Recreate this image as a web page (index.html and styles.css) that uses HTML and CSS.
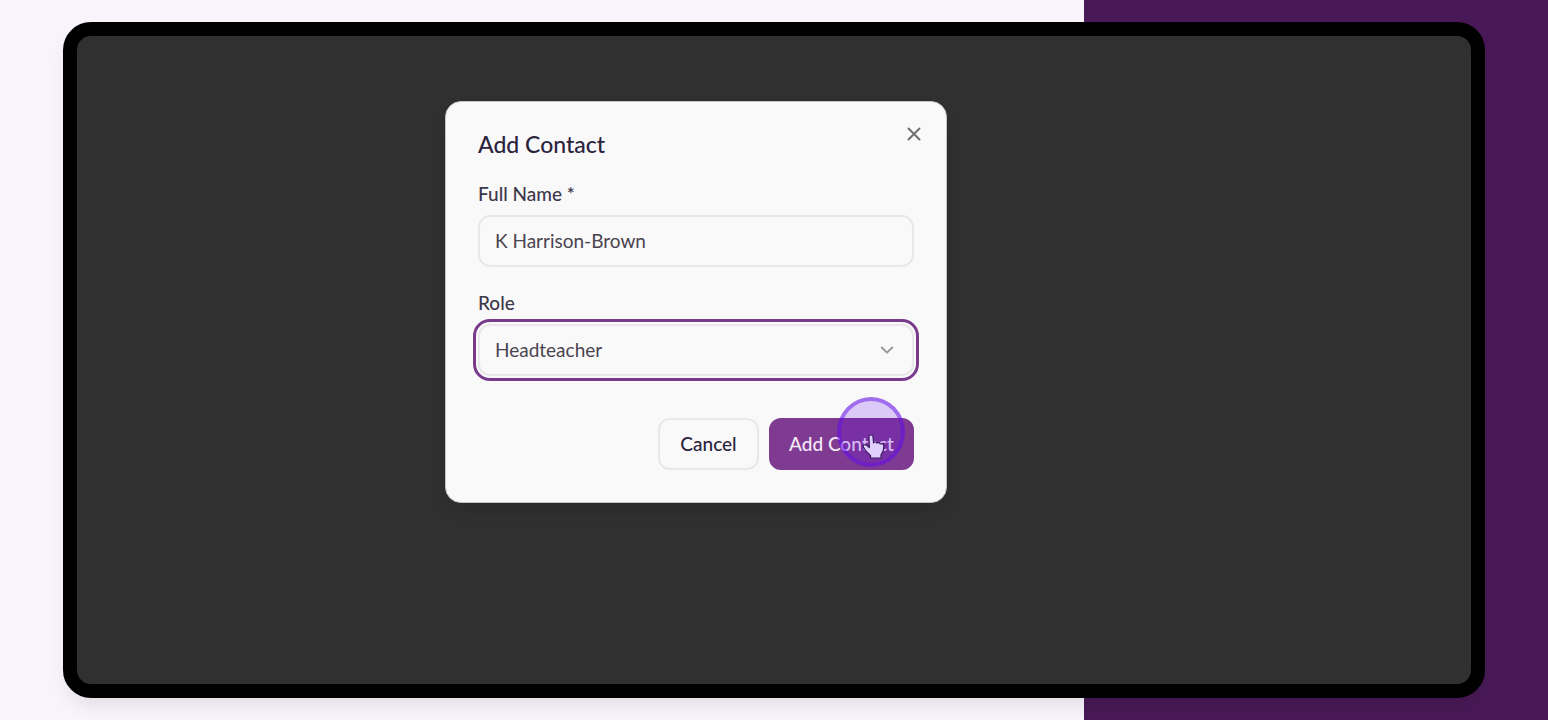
FILE: index.html
```html
<!DOCTYPE html>
<html lang="en">
<head>
    <meta charset="UTF-8">
    <meta name="viewport" content="width=device-width, initial-scale=1.0">
    <title>Add Contact</title>
    <link rel="stylesheet" href="styles.css">
</head>
<body>
    <main class="device">
        <form class="modal" role="dialog" aria-labelledby="modal-title">
            <button type="button" class="close-btn" aria-label="Close">
                <svg width="14" height="14" viewBox="0 0 14 14" fill="none" stroke="currentColor" stroke-width="2" stroke-linecap="round">
                    <path d="M1.500 1.500l11 11M12.500 1.500l-11 11"/>
                </svg>
            </button>

            <h1 id="modal-title">Add Contact</h1>

            <div class="field">
                <label for="full-name">Full Name *</label>
                <input type="text" id="full-name" value="K Harrison-Brown">
            </div>

            <div class="field">
                <label for="role">Role</label>
                <div class="select-wrap">
                    <select id="role">
                        <option selected>Headteacher</option>
                    </select>
                    <svg class="chevron" width="14" height="8" viewBox="0 0 14 8" fill="none" stroke="currentColor" stroke-width="2" stroke-linecap="round" stroke-linejoin="round">
                        <path d="M1.800 1.500L7 6.600l5.200-5.100"/>
                    </svg>
                </div>
            </div>

            <div class="actions">
                <button type="button" class="btn btn-secondary">Cancel</button>
                <div class="submit-wrap">
                    <button type="button" class="btn btn-primary">Add Contact</button>
                    <!-- pointer and click highlight -->
                    <svg class="pointer" width="24" height="26" viewBox="0 0 24 26">
                        <path d="M7 2.500c0-2 4-2 4 0l.5 6.300c.8-1.200 3-1 3.400.4.900-1 3-.7 3.200.8 1.400-.7 3.900-.2 3.700 2l-.5 4.500-2.300 4.500v3H8.500v-2.500C6 19.500 3.500 17 1.500 13.500c-1.200-2.200 1.200-3.800 3.200-2.200l2.600 2.200z" fill="#fff" stroke="#30203c" stroke-width="1.200" stroke-linejoin="round"/>
                    </svg>
                    <span class="click-ring"></span>
                </div>
            </div>
        </form>
    </main>
</body>
</html>
```
FILE: styles.css
```css
* {
    margin: 0;
    padding: 0;
    box-sizing: border-box;
}

body {
    font-family: Lato, 'Open Sans', sans-serif;
    background: linear-gradient(90deg, #f9f3fb 70%, #481956 70%);
    min-height: 100vh;
    padding: 22px 63px;
    display: flex;
    color: #3d374b;
}

.device {
    flex: 1;
    display: grid;
    grid-template-columns: 368fr 502px 524fr;
    align-items: start;
    padding-top: 65px;
    background: #303030;
    border: 14px solid #000;
    border-radius: 28px;
    box-shadow: 0 12px 20px -6px rgba(0, 0, 0, 0.1);
}

.modal {
    grid-column: 2;
    position: relative;
    padding: 28px 32px 32px;
    background: #f9f9f9;
    border: 1px solid #c4c4c4;
    border-radius: 16px;
    box-shadow: 0 8px 16px rgba(0, 0, 0, 0.1);
}

h1 {
    font-size: 23px;
    line-height: 28px;
    font-weight: 500;
    color: #2b233d;
}

.close-btn {
    position: absolute;
    top: 20px;
    right: 20px;
    width: 24px;
    height: 24px;
    display: grid;
    place-items: center;
    border: none;
    background: none;
    color: #707070;
    cursor: pointer;
}

.field {
    margin-top: 24px;
    display: flex;
    flex-direction: column;
    gap: 9px;
}

label {
    font-size: 19px;
    line-height: 24px;
    font-weight: 500;
}

input,
select {
    width: 100%;
    height: 52px;
    padding: 0 15px 2px;
    font-family: inherit;
    font-size: 19px;
    color: #494450;
    background: #f9f9f9;
    border: 2px solid #e8e7eb;
    border-radius: 12px;
    appearance: none;
}

.select-wrap {
    position: relative;
    display: flex;
}

select {
    outline: 3px solid #783a8b;
    outline-offset: 2px;
}

.chevron {
    position: absolute;
    right: 20px;
    top: 50%;
    transform: translateY(-50%);
    color: #999;
    pointer-events: none;
}

.actions {
    margin-top: 42px;
    display: flex;
    justify-content: flex-end;
    gap: 10px;
}

.btn {
    height: 52px;
    padding: 0 16px 2px;
    font-family: inherit;
    font-size: 19px;
    font-weight: 500;
    border: 2px solid #e8e7eb;
    border-radius: 12px;
    cursor: pointer;
}

.btn-secondary {
    min-width: 101px;
    background: #f9f9f9;
    color: #2b233d;
}

.btn-primary {
    min-width: 145px;
    background: #7f3a91;
    border-color: #7f3a91;
    color: #f3e8f6;
}

.submit-wrap {
    position: relative;
}

.pointer {
    position: absolute;
    right: 28px;
    top: 16px;
}

.click-ring {
    position: absolute;
    right: 9px;
    top: -21px;
    width: 68px;
    height: 70px;
    border: 4px solid rgba(100, 15, 230, 0.5);
    border-radius: 50%;
    background: rgba(100, 10, 240, 0.2);
    pointer-events: none;
}
```
